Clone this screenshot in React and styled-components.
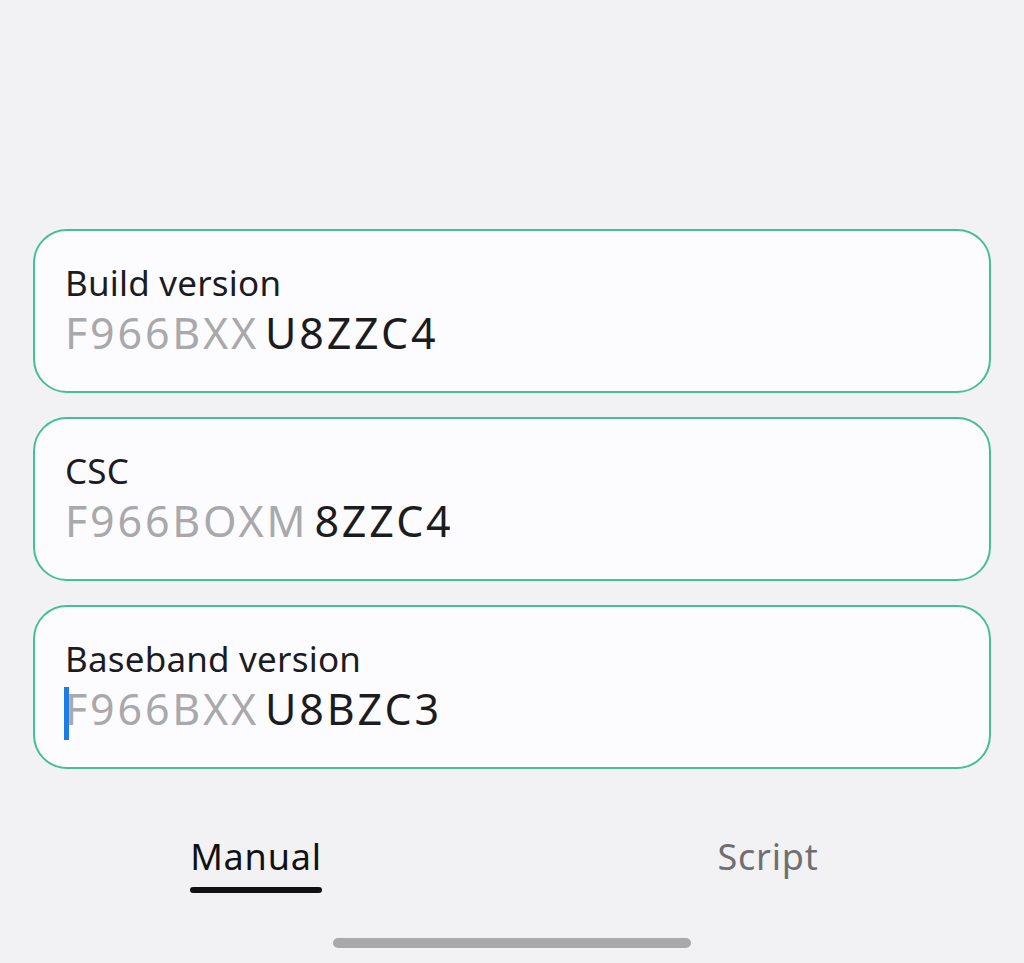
import React, { useState } from 'react';
import styled, { createGlobalStyle } from 'styled-components';

const GlobalStyle = createGlobalStyle`
  html, body {
    margin: 0;
    padding: 0;
    background: #f2f2f4;
    font-family: "Noto Sans", "Liberation Sans", sans-serif;
  }
`;

const Screen = styled.div`
  height: 963px;
  display: flex;
  flex-direction: column;
  background: #f2f2f4;
  overflow: hidden;
`;

const Fields = styled.div`
  display: flex;
  flex-direction: column;
  gap: 24px;
  padding: 229px 33px 0 33px;
`;

const Card = styled.div`
  height: 164px;
  box-sizing: border-box;
  border: 2.5px solid #45bf98;
  border-radius: 34px;
  background: #fcfcfe;
  padding: 31px 30px 0 30px;
  display: flex;
  flex-direction: column;
  gap: 2px;
`;

const Label = styled.div`
  font-size: 35px;
  line-height: 42px;
  color: #1c1c1e;
  letter-spacing: 0.2px;
`;

const Value = styled.div`
  position: relative;
  display: flex;
  align-items: baseline;
  gap: 6px;
  font-size: 43px;
  line-height: 54px;
  letter-spacing: 2.8px;
`;

const Prefix = styled.span`
  color: #a9a9ab;
`;

const Suffix = styled.span`
  color: #1c1c1e;
`;

const Caret = styled.span`
  position: absolute;
  left: -1px;
  top: 5px;
  width: 5px;
  height: 53px;
  background: #1a7de8;
`;

const Tabs = styled.div`
  display: grid;
  grid-template-columns: 1fr 1fr;
  margin-top: 64px;
`;

const Tab = styled.button`
  position: relative;
  justify-self: center;
  background: none;
  border: none;
  padding: 0 0 12px 0;
  font-family: inherit;
  font-size: 36px;
  line-height: 48px;
  letter-spacing: 0.8px;
  color: ${p => (p.$active ? '#111' : '#6f6f72')};
  cursor: pointer;

  &::after {
    content: '';
    display: ${p => (p.$active ? 'block' : 'none')};
    position: absolute;
    left: 0;
    right: 0;
    bottom: 0;
    height: 6px;
    border-radius: 3px;
    background: #111;
  }
`;

const HomeBar = styled.div`
  margin: auto auto 15px auto;
  width: 358px;
  height: 10px;
  border-radius: 5px;
  background: #a9a9ab;
`;

const fields = [
  { label: 'Build version', prefix: 'F966BXX', suffix: 'U8ZZC4' },
  { label: 'CSC', prefix: 'F966BOXM', suffix: '8ZZC4' },
  { label: 'Baseband version', prefix: 'F966BXX', suffix: 'U8BZC3', focused: true },
];

export default function App() {
  const [tab, setTab] = useState('manual');
  return (
    <Screen>
      <GlobalStyle />
      <Fields>
        {fields.map(f => (
          <Card key={f.label}>
            <Label>{f.label}</Label>
            <Value>
              {f.focused && <Caret />}
              <Prefix>{f.prefix}</Prefix>
              <Suffix>{f.suffix}</Suffix>
            </Value>
          </Card>
        ))}
      </Fields>
      <Tabs>
        <Tab $active={tab === 'manual'} onClick={() => setTab('manual')}>Manual</Tab>
        <Tab $active={tab === 'script'} onClick={() => setTab('script')}>Script</Tab>
      </Tabs>
      <HomeBar />
    </Screen>
  );
}
